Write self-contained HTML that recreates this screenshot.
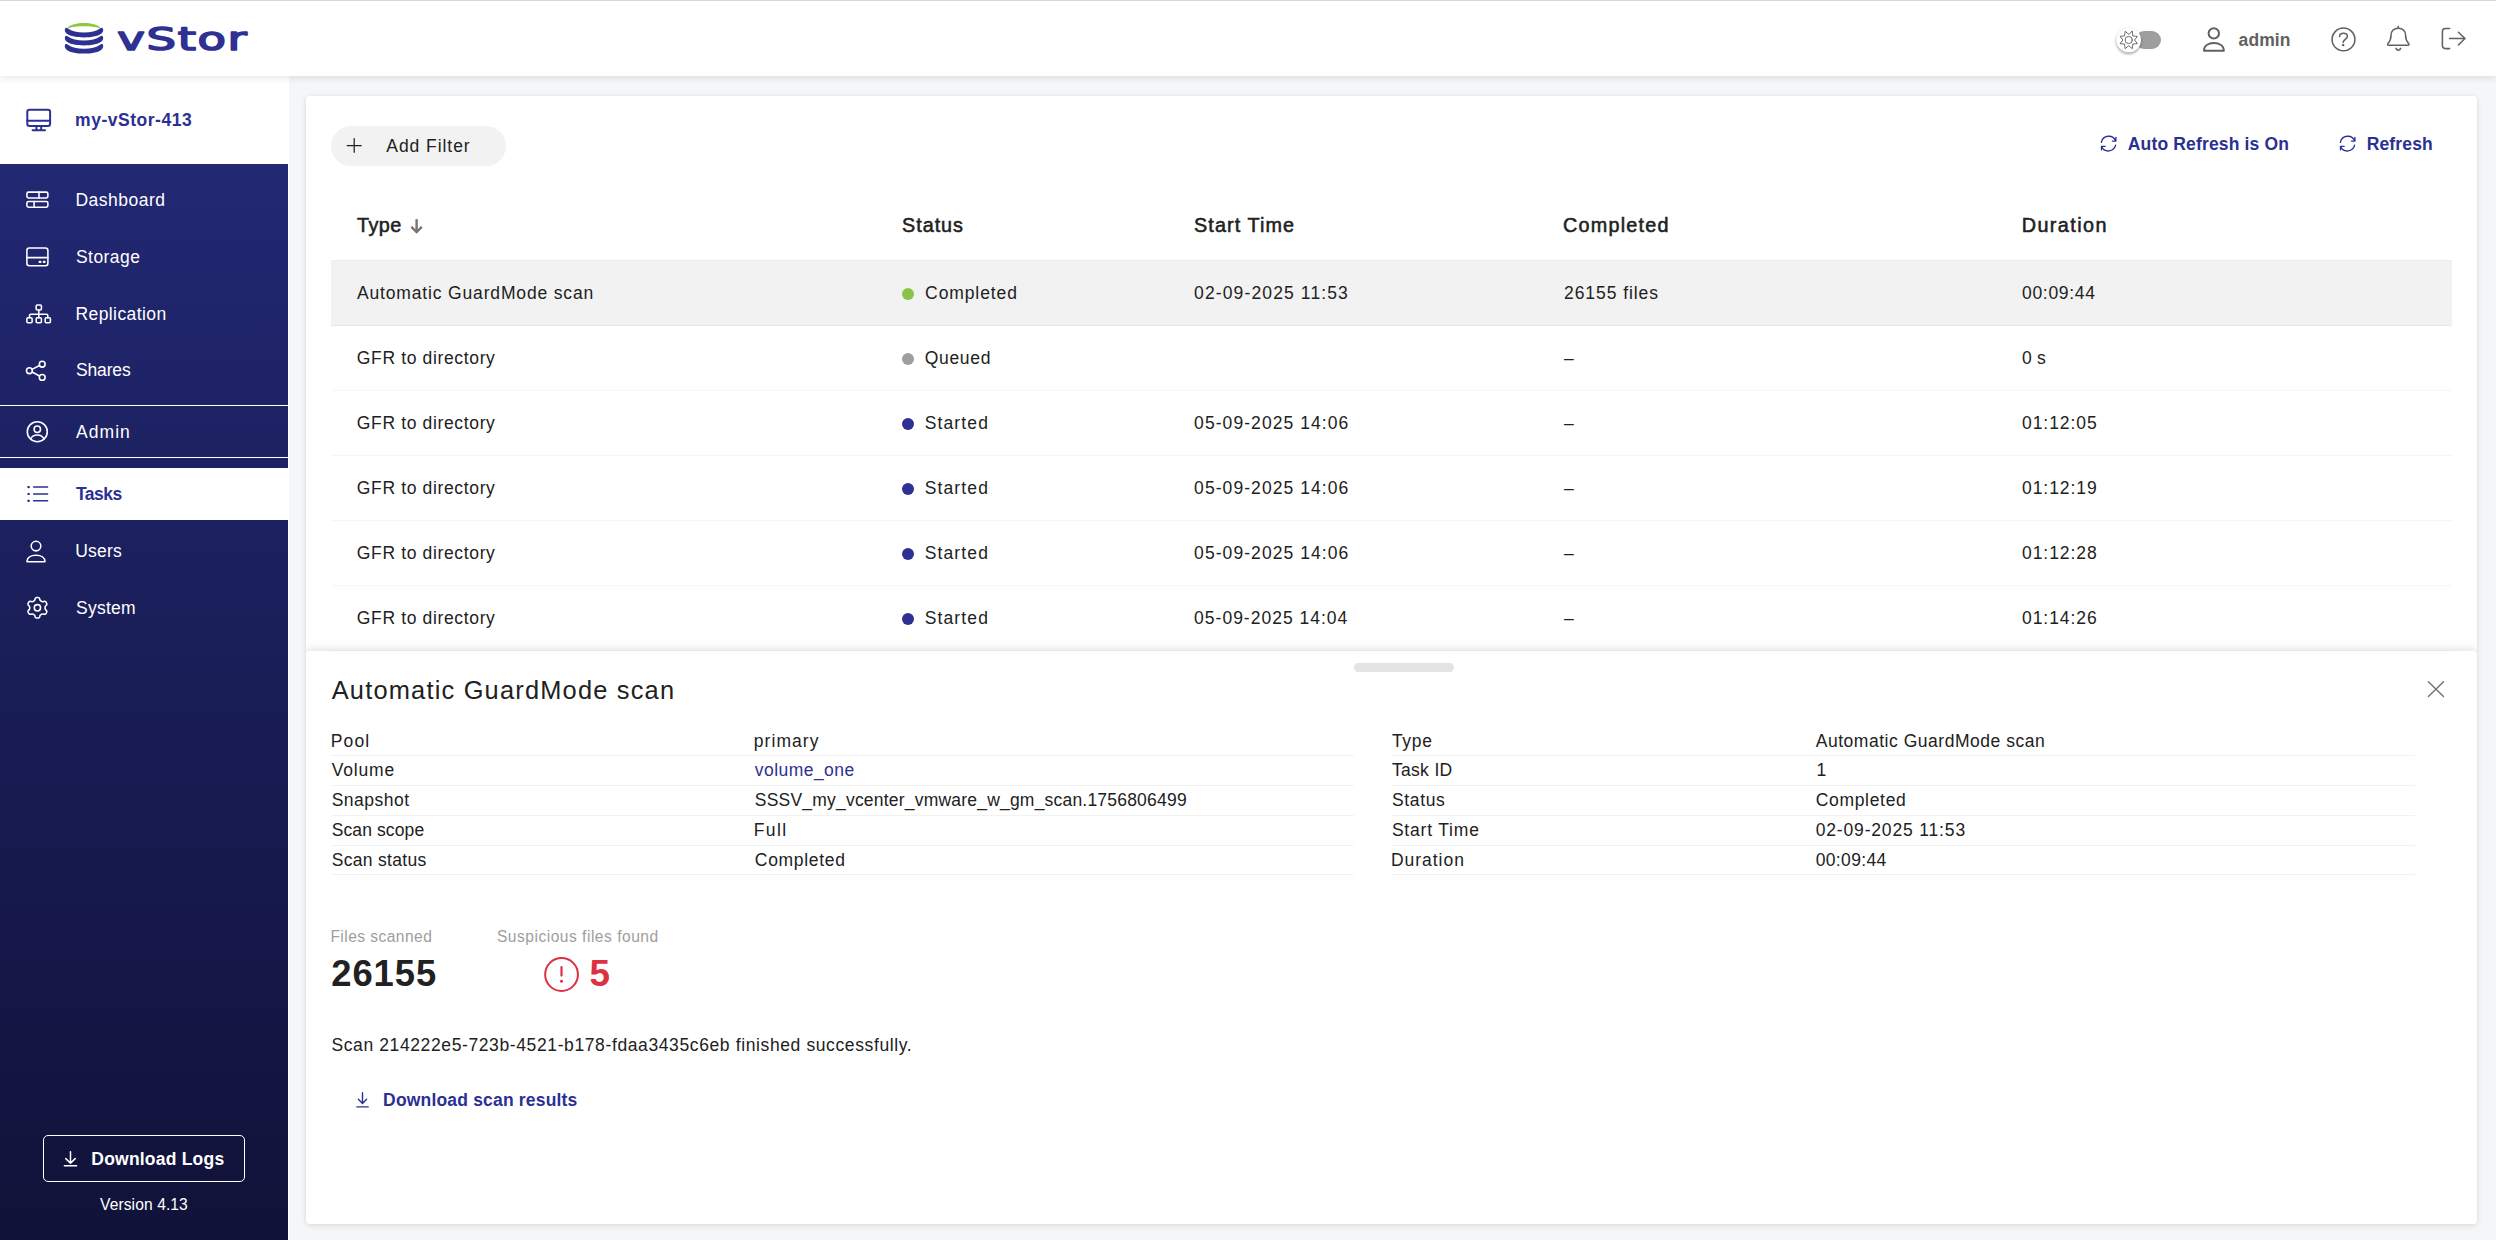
<!DOCTYPE html>
<html lang="en">
<head>
<meta charset="utf-8">
<title>vStor - Tasks</title>
<style>
*{box-sizing:border-box;margin:0;padding:0}
html,body{width:2496px;height:1240px;overflow:hidden}
body{background:#f5f6f8;font-family:"Liberation Sans",sans-serif;color:#212121;position:relative}
.t{position:absolute;white-space:nowrap;line-height:1}
i{font-style:normal}
#hdr{position:absolute;left:0;top:0;width:2496px;height:76px;background:#fff;box-shadow:0 2px 7px rgba(0,0,0,.10);z-index:5}
#hdrline{position:absolute;left:0;top:0;width:2496px;height:1px;background:#d8d8da}
#admin{left:2238px;top:31px;font-size:18px;font-weight:bold;color:#616161}
#side{position:absolute;left:0;top:76px;width:288px;height:1164px;background:linear-gradient(180deg,#222873 88px,#101238 1164px);z-index:3}
#sideline{position:absolute;left:288px;top:0;width:1px;height:1164px;background:#fff}
#host{position:absolute;left:0;top:0;width:288px;height:88px;background:#fff}
#hostname{left:76px;top:35px;font-size:18px;font-weight:bold;color:#2b3094}
.nav{position:absolute;left:0;width:288px;height:52px;color:#fff}
.nav .t{left:75px;top:17px;font-size:18px;color:#fff}
.nav.act{background:#fff}
.nav.act .t{color:#2b3094;font-weight:bold}
.hl{position:absolute;left:0;width:288px;height:1px;background:#fff}
#dlbtn{position:absolute;left:43px;top:1059px;width:202px;height:47px;border:1px solid #fff;border-radius:5px}
#dllogs{left:48px;top:14px;font-size:18px;font-weight:bold;color:#fff}
#ver{left:100px;top:1121px;font-size:15px;color:#fff}
#card{position:absolute;left:306px;top:96px;width:2171px;height:1128px;background:#fff;border-radius:4px;box-shadow:0 2px 6px rgba(0,0,0,.085),0 0 4px rgba(0,0,0,.05);overflow:hidden}
#chip{position:absolute;left:25px;top:30px;width:175px;height:40px;border-radius:20px;background:#f2f2f2}
#addf{left:55px;top:11px;font-size:18px}
.lnk{font-size:18px;font-weight:bold;color:#2b3094}
#auto{left:1822px;top:39px}
#refr{left:2061px;top:39px}
.th{font-size:20px;font-weight:normal;top:119px;color:#212121;-webkit-text-stroke:0.55px #212121}
#thline{position:absolute;left:25px;top:164px;width:2121px;height:1px;background:#ececec}
.row{position:absolute;left:25px;width:2121px;height:65px;border-bottom:1px solid #f6f6f6}
.row.last{border-bottom-color:#f9f9f9}
.row.sel{background:#f2f2f2;border-bottom:1px solid #e8e8e8}
.row .t{font-size:18px;top:24px}
.dot{position:absolute;left:571px;top:27px;width:12px;height:12px;border-radius:50%}
.c1{left:26px}.c2{left:596px}.c2s{left:593px}.c3{left:888px}.c4{left:1258px}.c5{left:1716px}
.row .c1{left:26px}.row .c3{left:863px}.row .c4{left:1233px}.row .c5{left:1691px}
#panel{position:absolute;left:0;top:555px;width:2171px;height:573px;background:#fff;border-radius:4px 4px 0 0;box-shadow:0 -2px 8px rgba(0,0,0,.12)}
#grip{position:absolute;left:1048px;top:12px;width:100px;height:9px;border-radius:4.5px;background:#e4e4e4}
#ptitle{left:26px;top:26px;font-size:26px;color:#212121}
.dl{position:absolute;height:1px;background:#f2f2f2}
.dt{font-size:18px}
.vlink{color:#2e3192}
.lbl{font-size:16px;color:#9e9e9e}
.big{font-size:36px;font-weight:bold;color:#212121}
.red{color:#de3043}
</style>
</head>
<body>
<div id="hdr"><div id="hdrline"></div>
<span class="t" id="admin" style="left:2238.60px;top:32.00px;font-size:17.5px;letter-spacing:0.064px">admin</span>
</div>
<div id="side">
<div id="sideline"></div>
<div id="host"><span class="t" id="hostname" style="left:75.10px;top:36.00px;font-size:17.5px;letter-spacing:0.514px">my-vStor-413</span></div>
<div class="nav" style="top:98px"><span class="t" id="nav-dashboard" style="left:75.50px;top:18.00px;font-size:17.5px;letter-spacing:0.478px">Dashboard</span></div>
<div class="nav" style="top:155px"><span class="t" id="nav-storage" style="left:76.00px;top:18.00px;font-size:17.5px;letter-spacing:0.440px">Storage</span></div>
<div class="nav" style="top:212px"><span class="t" id="nav-replication" style="left:75.50px;top:18.00px;font-size:17.5px;letter-spacing:0.406px">Replication</span></div>
<div class="nav" style="top:268px"><span class="t" id="nav-shares" style="left:76.00px;top:18.00px;font-size:17.5px;letter-spacing:-0.160px">Shares</span></div>
<div class="nav" style="top:330px"><span class="t" id="nav-admin" style="left:76.00px;top:18.00px;font-size:17.5px;letter-spacing:1.057px">Admin</span></div>
<div class="nav act" style="top:392px"><span class="t" id="nav-tasks" style="left:76.00px;top:18.00px;font-size:17.5px;letter-spacing:-0.522px">Tasks</span></div>
<div class="nav" style="top:449px"><span class="t" id="nav-users" style="left:75.20px;top:18.00px;font-size:17.5px;letter-spacing:0.213px">Users</span></div>
<div class="nav" style="top:506px"><span class="t" id="nav-system" style="left:76.00px;top:18.00px;font-size:17.5px;letter-spacing:0.267px">System</span></div>
<div class="hl" style="top:329px"></div><div class="hl" style="top:381px"></div>
<div id="dlbtn"><span class="t" id="dllogs" style="left:47.30px;top:15.00px;font-size:17.5px;letter-spacing:0.214px">Download Logs</span></div>
<span class="t" id="ver" style="left:100.00px;top:1121.00px;font-size:15.6px;letter-spacing:0.098px">Version 4.13</span>
</div>
<div id="card">
<div id="chip"><span class="t" id="addf" style="left:55.30px;top:12.00px;font-size:17.5px;letter-spacing:0.938px">Add Filter</span></div>
<span class="t lnk" id="auto" style="left:1821.80px;top:40.00px;font-size:17.5px;letter-spacing:0.159px">Auto Refresh is On</span><span class="t lnk" id="refr" style="left:2060.70px;top:40.00px;font-size:17.5px;letter-spacing:0.154px">Refresh</span>
<span class="t th c1" id="th0" style="left:50.90px;top:120.00px;font-size:19.8px;letter-spacing:0.506px">Type</span><span class="t th c2" id="th1" style="left:596.00px;top:120.00px;font-size:19.8px;letter-spacing:0.982px">Status</span><span class="t th c3" id="th2" style="left:888.10px;top:120.00px;font-size:19.8px;letter-spacing:1.079px">Start Time</span><span class="t th c4" id="th3" style="left:1257.00px;top:120.00px;font-size:19.8px;letter-spacing:1.218px">Completed</span><span class="t th c5" id="th4" style="left:1715.70px;top:120.00px;font-size:19.8px;letter-spacing:1.419px">Duration</span>
<div id="thline"></div>
<div class="row sel" style="top:165px"><span class="t c1" id="r0a" style="left:26.00px;top:24.00px;font-size:17.5px;letter-spacing:0.840px">Automatic GuardMode scan</span><i class="dot" style="background:#8bc34a"></i><span class="t c2s" id="r0b" style="left:594.10px;top:24.00px;font-size:17.5px;letter-spacing:0.900px">Completed</span><span class="t c3" id="r0c" style="left:863.10px;top:24.00px;font-size:17.5px;letter-spacing:1.124px">02-09-2025 11:53</span><span class="t c4" id="r0d" style="left:1233.00px;top:24.00px;font-size:17.5px;letter-spacing:0.940px">26155 files</span><span class="t c5" id="r0e" style="left:1691.00px;top:24.00px;font-size:17.5px;letter-spacing:0.702px">00:09:44</span></div>
<div class="row" style="top:230px"><span class="t c1" id="r1a" style="left:25.80px;top:24.00px;font-size:17.5px;letter-spacing:0.646px">GFR to directory</span><i class="dot" style="background:#9e9e9e"></i><span class="t c2s" id="r1b" style="left:593.70px;top:24.00px;font-size:17.5px;letter-spacing:0.691px">Queued</span><span class="t c4" id="r1d" style="left:1233.00px;top:24.00px;font-size:17.5px;letter-spacing:0.000px">–</span><span class="t c5" id="r1e" style="left:1691.00px;top:24.00px;font-size:17.5px;letter-spacing:0.203px">0 s</span></div>
<div class="row" style="top:295px"><span class="t c1" id="r2a" style="left:25.80px;top:24.00px;font-size:17.5px;letter-spacing:0.646px">GFR to directory</span><i class="dot" style="background:#2e3192"></i><span class="t c2s" id="r2b" style="left:593.70px;top:24.00px;font-size:17.5px;letter-spacing:1.135px">Started</span><span class="t c3" id="r2c" style="left:863.10px;top:24.00px;font-size:17.5px;letter-spacing:1.071px">05-09-2025 14:06</span><span class="t c4" id="r2d" style="left:1233.00px;top:24.00px;font-size:17.5px;letter-spacing:0.000px">–</span><span class="t c5" id="r2e" style="left:1691.00px;top:24.00px;font-size:17.5px;letter-spacing:0.945px">01:12:05</span></div>
<div class="row" style="top:360px"><span class="t c1" id="r3a" style="left:25.80px;top:24.00px;font-size:17.5px;letter-spacing:0.646px">GFR to directory</span><i class="dot" style="background:#2e3192"></i><span class="t c2s" id="r3b" style="left:593.70px;top:24.00px;font-size:17.5px;letter-spacing:1.135px">Started</span><span class="t c3" id="r3c" style="left:863.10px;top:24.00px;font-size:17.5px;letter-spacing:1.071px">05-09-2025 14:06</span><span class="t c4" id="r3d" style="left:1233.00px;top:24.00px;font-size:17.5px;letter-spacing:0.000px">–</span><span class="t c5" id="r3e" style="left:1691.00px;top:24.00px;font-size:17.5px;letter-spacing:0.945px">01:12:19</span></div>
<div class="row" style="top:425px"><span class="t c1" id="r4a" style="left:25.80px;top:24.00px;font-size:17.5px;letter-spacing:0.646px">GFR to directory</span><i class="dot" style="background:#2e3192"></i><span class="t c2s" id="r4b" style="left:593.70px;top:24.00px;font-size:17.5px;letter-spacing:1.135px">Started</span><span class="t c3" id="r4c" style="left:863.10px;top:24.00px;font-size:17.5px;letter-spacing:1.071px">05-09-2025 14:06</span><span class="t c4" id="r4d" style="left:1233.00px;top:24.00px;font-size:17.5px;letter-spacing:0.000px">–</span><span class="t c5" id="r4e" style="left:1691.00px;top:24.00px;font-size:17.5px;letter-spacing:0.945px">01:12:28</span></div>
<div class="row last" style="top:490px"><span class="t c1" id="r5a" style="left:25.80px;top:24.00px;font-size:17.5px;letter-spacing:0.646px">GFR to directory</span><i class="dot" style="background:#2e3192"></i><span class="t c2s" id="r5b" style="left:593.70px;top:24.00px;font-size:17.5px;letter-spacing:1.135px">Started</span><span class="t c3" id="r5c" style="left:863.10px;top:24.00px;font-size:17.5px;letter-spacing:1.004px">05-09-2025 14:04</span><span class="t c4" id="r5d" style="left:1233.00px;top:24.00px;font-size:17.5px;letter-spacing:0.000px">–</span><span class="t c5" id="r5e" style="left:1691.00px;top:24.00px;font-size:17.5px;letter-spacing:0.945px">01:14:26</span></div>
<div id="panel">
<div id="grip"></div>
<span class="t" id="ptitle" style="left:25.70px;top:27.00px;font-size:25.4px;letter-spacing:1.200px">Automatic GuardMode scan</span>
<span class="t dt" id="l0a" style="left:24.70px;top:82.00px;font-size:17.5px;letter-spacing:1.154px">Pool</span><span class="t dt" id="l0b" style="left:447.80px;top:82.00px;font-size:17.5px;letter-spacing:1.052px">primary</span><div class="dl" style="left:25px;width:1023px;top:104px"></div>
<span class="t dt" id="l1a" style="left:25.70px;top:111.00px;font-size:17.5px;letter-spacing:0.812px">Volume</span><span class="t dt vlink" id="l1b" style="left:448.80px;top:111.00px;font-size:17.5px;letter-spacing:0.454px">volume_one</span><div class="dl" style="left:25px;width:1023px;top:134px"></div>
<span class="t dt" id="l2a" style="left:25.70px;top:141.00px;font-size:17.5px;letter-spacing:0.502px">Snapshot</span><span class="t dt" id="l2b" style="left:448.80px;top:141.00px;font-size:17.5px;letter-spacing:0.206px">SSSV_my_vcenter_vmware_w_gm_scan.1756806499</span><div class="dl" style="left:25px;width:1023px;top:164px"></div>
<span class="t dt" id="l3a" style="left:25.70px;top:171.00px;font-size:17.5px;letter-spacing:0.109px">Scan scope</span><span class="t dt" id="l3b" style="left:447.80px;top:171.00px;font-size:17.5px;letter-spacing:1.363px">Full</span><div class="dl" style="left:25px;width:1023px;top:194px"></div>
<span class="t dt" id="l4a" style="left:25.70px;top:201.00px;font-size:17.5px;letter-spacing:0.311px">Scan status</span><span class="t dt" id="l4b" style="left:448.80px;top:201.00px;font-size:17.5px;letter-spacing:0.700px">Completed</span><div class="dl" style="left:25px;width:1023px;top:223px"></div>
<span class="t dt" id="q0a" style="left:1085.90px;top:82.00px;font-size:17.5px;letter-spacing:0.698px">Type</span><span class="t dt" id="q0b" style="left:1509.70px;top:82.00px;font-size:17.5px;letter-spacing:0.527px">Automatic GuardMode scan</span><div class="dl" style="left:1086px;width:1023px;top:104px"></div>
<span class="t dt" id="q1a" style="left:1085.90px;top:111.00px;font-size:17.5px;letter-spacing:0.332px">Task ID</span><span class="t dt" id="q1b" style="left:1510.50px;top:111.00px;font-size:17.5px;letter-spacing:0.000px">1</span><div class="dl" style="left:1086px;width:1023px;top:134px"></div>
<span class="t dt" id="q2a" style="left:1085.90px;top:141.00px;font-size:17.5px;letter-spacing:0.668px">Status</span><span class="t dt" id="q2b" style="left:1509.70px;top:141.00px;font-size:17.5px;letter-spacing:0.688px">Completed</span><div class="dl" style="left:1086px;width:1023px;top:164px"></div>
<span class="t dt" id="q3a" style="left:1085.90px;top:171.00px;font-size:17.5px;letter-spacing:0.808px">Start Time</span><span class="t dt" id="q3b" style="left:1509.70px;top:171.00px;font-size:17.5px;letter-spacing:0.837px">02-09-2025 11:53</span><div class="dl" style="left:1086px;width:1023px;top:194px"></div>
<span class="t dt" id="q4a" style="left:1084.90px;top:201.00px;font-size:17.5px;letter-spacing:0.984px">Duration</span><span class="t dt" id="q4b" style="left:1509.70px;top:201.00px;font-size:17.5px;letter-spacing:0.345px">00:09:44</span><div class="dl" style="left:1086px;width:1023px;top:223px"></div>
<span class="t lbl" id="fsl" style="left:24.40px;top:278.00px;font-size:15.6px;letter-spacing:0.438px">Files scanned</span><span class="t lbl" id="sfl" style="left:190.90px;top:278.00px;font-size:15.6px;letter-spacing:0.497px">Suspicious files found</span>
<span class="t big" id="fsn" style="left:25.20px;top:305.00px;font-size:36.4px;letter-spacing:0.961px">26155</span><span class="t big red" id="sfn" style="left:283.40px;top:305.00px;font-size:36.8px;letter-spacing:0.000px">5</span>
<span class="t dt" id="msg" style="left:25.40px;top:386.00px;font-size:17.5px;letter-spacing:0.614px">Scan 214222e5-723b-4521-b178-fdaa3435c6eb finished successfully.</span>
<span class="t lnk" id="dlres" style="left:77.10px;top:441.00px;font-size:17.5px;letter-spacing:0.181px">Download scan results</span>
</div>
</div>
<svg id="ico" width="2496" height="1240" viewBox="0 0 2496 1240" style="position:absolute;left:0;top:0;z-index:9;pointer-events:none" fill="none" stroke-linecap="round" stroke-linejoin="round">
<g id="logo">
<path fill="#8cc63f" d="M67.8,27.6 C70.5,24.8 77,23.1 84,23.1 C91,23.1 97.5,24.8 100.2,27.6 C100.6,28.1 100.2,28.5 99.6,28.2 C96,26.9 90.5,26.3 84,26.3 C77.5,26.3 72,26.9 68.4,28.2 C67.8,28.5 67.4,28.1 67.8,27.6 Z"/>
<path fill="#2e3192" d="M65.7,27.90 C64.4,28.50 64.5,31.40 66,33.00 C69,36.00 76,37.40 84,37.40 C92,37.40 99,36.00 102,33.00 C103.5,31.40 103.6,28.50 102.3,27.90 C101.5,27.50 100.7,27.90 100,28.50 C96.5,31.20 91,32.50 84,32.50 C77,32.50 71.5,31.20 68,28.50 C67.3,27.90 66.5,27.50 65.7,27.90 Z"/>
<path fill="#2e3192" d="M65.7,36.00 C64.4,36.60 64.5,39.50 66,41.10 C69,44.10 76,45.50 84,45.50 C92,45.50 99,44.10 102,41.10 C103.5,39.50 103.6,36.60 102.3,36.00 C101.5,35.60 100.7,36.00 100,36.60 C96.5,39.30 91,40.60 84,40.60 C77,40.60 71.5,39.30 68,36.60 C67.3,36.00 66.5,35.60 65.7,36.00 Z"/>
<path fill="#2e3192" d="M65.7,44.10 C64.4,44.70 64.5,47.60 66,49.20 C69,52.20 76,53.60 84,53.60 C92,53.60 99,52.20 102,49.20 C103.5,47.60 103.6,44.70 102.3,44.10 C101.5,43.70 100.7,44.10 100,44.70 C96.5,47.40 91,48.70 84,48.70 C77,48.70 71.5,47.40 68,44.70 C67.3,44.10 66.5,43.70 65.7,44.10 Z"/>
<text id="logotxt" x="0" y="0" transform="translate(117.3,49.9) scale(1.478,1)" letter-spacing="1.1" font-family="DejaVu Sans, Liberation Sans, sans-serif" font-size="31.5" fill="#2e3192" stroke="#2e3192" stroke-width="2" stroke-linejoin="round" vector-effect="non-scaling-stroke">vStor</text>
</g>
<g stroke="#2b3094" stroke-width="2"><rect x="27.3" y="109.8" width="22.8" height="16.2" rx="2.2"/><path d="M27.3,120.8H50.1M36.4,126.2V130M41.2,126.2V130M32.6,130.2H45"/></g>
<g stroke="#fff" stroke-width="1.55">
<rect x="26.9" y="192.1" width="21" height="5.8" rx="1.6"/><rect x="26.9" y="201.4" width="21" height="5.8" rx="1.6"/><path d="M39,192.1V197.9M34.1,201.4V207.2"/>
<rect x="26.9" y="248" width="21" height="17.7" rx="2.4"/><path d="M26.9,257.6H47.9"/><path d="M39.6,261.9H40.4M43.8,261.9H44.6" stroke-width="2.2"/>
<rect x="36.2" y="304.9" width="5.2" height="5" rx="1"/><rect x="26.9" y="317.8" width="5.2" height="5" rx="1"/><rect x="36.2" y="317.8" width="5.2" height="5" rx="1"/><rect x="45.2" y="317.8" width="5.2" height="5" rx="1"/><path d="M38.8,309.9V317.8M29.5,317.8V315.6Q29.5,314.2 30.9,314.2H46.4Q47.8,314.2 47.8,315.6V317.8"/>
<circle cx="42.2" cy="364.2" r="2.9"/><circle cx="29.4" cy="370.7" r="2.9"/><circle cx="42.2" cy="377.4" r="2.9"/><path d="M32,369.4L39.6,365.5M32,372L39.6,376"/>
<circle cx="37.3" cy="431.7" r="10"/><circle cx="37.3" cy="429.3" r="3.2"/><path d="M30.6,439.1C31.6,436.2 34.2,434.9 37.3,434.9C40.4,434.9 43,436.2 44,439.1"/>
<circle cx="36" cy="546.1" r="4.8"/><path d="M27,561.8C27,557.4 31,555.2 36,555.2C41,555.2 45,557.4 45,561.8Z"/>
<path d="M45.10,607.80 L45.10,608.14 L45.10,608.47 L45.14,608.82 L45.25,609.18 L45.56,609.61 L46.09,610.13 L46.60,610.70 L46.82,611.23 L46.82,611.70 L46.70,612.14 L46.53,612.55 L46.32,612.95 L46.08,613.33 L45.81,613.69 L45.49,614.01 L45.08,614.25 L44.51,614.31 L43.76,614.16 L43.05,613.96 L42.52,613.91 L42.15,613.99 L41.84,614.13 L41.54,614.30 L41.25,614.47 L40.96,614.64 L40.67,614.81 L40.39,615.01 L40.13,615.29 L39.91,615.77 L39.73,616.49 L39.49,617.21 L39.14,617.67 L38.73,617.91 L38.29,618.03 L37.85,618.08 L37.40,618.10 L36.95,618.08 L36.51,618.03 L36.07,617.91 L35.66,617.67 L35.31,617.21 L35.07,616.49 L34.89,615.77 L34.67,615.29 L34.41,615.01 L34.13,614.81 L33.84,614.64 L33.55,614.47 L33.26,614.30 L32.96,614.13 L32.65,613.99 L32.28,613.91 L31.75,613.96 L31.04,614.16 L30.29,614.31 L29.72,614.25 L29.31,614.01 L28.99,613.69 L28.72,613.33 L28.48,612.95 L28.27,612.55 L28.10,612.14 L27.98,611.70 L27.98,611.23 L28.20,610.70 L28.71,610.13 L29.24,609.61 L29.55,609.18 L29.66,608.82 L29.70,608.47 L29.70,608.14 L29.70,607.80 L29.70,607.46 L29.70,607.13 L29.66,606.78 L29.55,606.42 L29.24,605.99 L28.71,605.47 L28.20,604.90 L27.98,604.37 L27.98,603.90 L28.10,603.46 L28.27,603.05 L28.48,602.65 L28.72,602.27 L28.99,601.91 L29.31,601.59 L29.72,601.35 L30.29,601.29 L31.04,601.44 L31.75,601.64 L32.28,601.69 L32.65,601.61 L32.96,601.47 L33.26,601.30 L33.55,601.13 L33.84,600.96 L34.13,600.79 L34.41,600.59 L34.67,600.31 L34.89,599.83 L35.07,599.11 L35.31,598.39 L35.66,597.93 L36.07,597.69 L36.51,597.57 L36.95,597.52 L37.40,597.50 L37.85,597.52 L38.29,597.57 L38.73,597.69 L39.14,597.93 L39.49,598.39 L39.73,599.11 L39.91,599.83 L40.13,600.31 L40.39,600.59 L40.67,600.79 L40.96,600.96 L41.25,601.13 L41.54,601.30 L41.84,601.47 L42.15,601.61 L42.52,601.69 L43.05,601.64 L43.76,601.44 L44.51,601.29 L45.08,601.35 L45.49,601.59 L45.81,601.91 L46.08,602.27 L46.32,602.65 L46.53,603.05 L46.70,603.46 L46.82,603.90 L46.82,604.37 L46.60,604.90 L46.09,605.47 L45.56,605.99 L45.25,606.42 L45.14,606.78 L45.10,607.13 L45.10,607.46Z"/><circle cx="37.4" cy="607.8" r="3.15"/>
</g>
<g stroke="#2b3094" stroke-width="1.5"><path d="M33.6,487.1H47.6M33.6,494H47.6M33.6,500.8H47.6"/><path d="M28.3,487.1H28.9M28.3,494H28.9M28.3,500.8H28.9" stroke-width="2.2"/></g>
<g stroke="#fff" stroke-width="1.5"><path d="M70.5,1151.8V1162.8M65.8,1158.6L70.5,1163.2L75.2,1158.6M64.4,1165.8H76.6"/></g>
<rect x="2135" y="31" width="26" height="18" rx="9" fill="#9e9e9e"/>
<defs><filter id="kb" x="-50%" y="-50%" width="200%" height="200%"><feGaussianBlur stdDeviation="1.6"/></filter></defs><circle cx="2128.7" cy="41.6" r="12.3" fill="#000" opacity=".38" filter="url(#kb)"/>
<circle cx="2128.7" cy="40" r="12.3" fill="#fff"/>
<g stroke="#5a5a5a" stroke-width="0.9"><path d="M2132.30,31.32 L2132.80,35.90 L2137.38,36.40 L2134.50,40.00 L2137.38,43.60 L2132.80,44.10 L2132.30,48.68 L2128.70,45.80 L2125.10,48.68 L2124.60,44.10 L2120.02,43.60 L2122.90,40.00 L2120.02,36.40 L2124.60,35.90 L2125.10,31.32 L2128.70,34.20Z"/><circle cx="2128.7" cy="40" r="3.6"/></g>
<g stroke="#616161" stroke-width="2"><circle cx="2213.8" cy="33.4" r="5.2"/><path d="M2204,50.7C2204,45.6 2208.4,43 2213.9,43C2219.4,43 2223.8,45.6 2223.8,50.7Z"/></g>
<g stroke="#616161" stroke-width="1.55"><circle cx="2343.5" cy="39.4" r="11.4"/><path d="M2339.6,36.6C2339.6,34.6 2341.2,33.2 2343.5,33.2C2345.8,33.2 2347.4,34.6 2347.4,36.4C2347.4,38.6 2343.4,39.6 2343.2,42.4"/><path d="M2342.9,45.2H2343.3" stroke-width="2.2"/></g>
<g stroke="#616161" stroke-width="1.55"><path d="M2398.3,26.4V28"/><path d="M2388.6,45.3H2408C2409,45.3 2409.3,44.3 2408.6,43.5C2406.4,41.2 2405.6,39.6 2405.6,35.6C2405.6,31 2402.6,28.2 2398.3,28.2C2394,28.2 2391,31 2391,35.6C2391,39.6 2390.2,41.2 2388,43.5C2387.3,44.3 2387.6,45.3 2388.6,45.3Z"/><path d="M2396,48.4C2396.5,49.7 2397.3,50.2 2398.3,50.2C2399.3,50.2 2400.1,49.7 2400.6,48.4"/></g>
<g stroke="#616161" stroke-width="1.55"><path d="M2449.6,28.4H2445.4Q2442.4,28.4 2442.4,31.4V45.6Q2442.4,48.6 2445.4,48.6H2449.6"/><path d="M2449.6,38.5H2464.8M2458.4,32.2L2465,38.5L2458.4,45"/></g>
<path stroke="#212121" stroke-width="1.25" d="M347.2,145.5H361.2M354.2,138.5V152.3"/>
<g stroke="#2b3094" stroke-width="1.35"><path d="M2101.40,142.40A7.5,7.5 0 0 1 2115.60,140.60M2115.90,137.30V141.10H2112.40M2115.60,145.20A7.5,7.5 0 0 1 2101.60,146.80M2101.50,149.80V146.40H2105.10"/><path d="M2340.40,142.40A7.5,7.5 0 0 1 2354.60,140.60M2354.90,137.30V141.10H2351.40M2354.60,145.20A7.5,7.5 0 0 1 2340.60,146.80M2340.50,149.80V146.40H2344.10"/></g>
<g stroke="#757575" stroke-width="2.4" stroke-linecap="butt" stroke-linejoin="miter"><path d="M416.6,219.1V232"/><path d="M411.4,226.9L416.6,232.1L421.8,226.9"/></g>
<path stroke="#707070" stroke-width="1.4" d="M2428.4,681.7L2443.5,696.4M2443.5,681.7L2428.4,696.4"/>
<g stroke="#de3043"><circle cx="561.55" cy="974.5" r="16.4" stroke-width="2"/><path d="M561.5,967V975.6" stroke-width="2.2"/><path d="M561.5,981.1V981.4" stroke-width="2.9"/></g>
<g stroke="#2b3094" stroke-width="1.4"><path d="M362.5,1092.7V1103.2M358.4,1099.3L362.5,1103.4L366.6,1099.3M356.9,1106.9H368.2"/></g>
</svg>
</body>
</html>
